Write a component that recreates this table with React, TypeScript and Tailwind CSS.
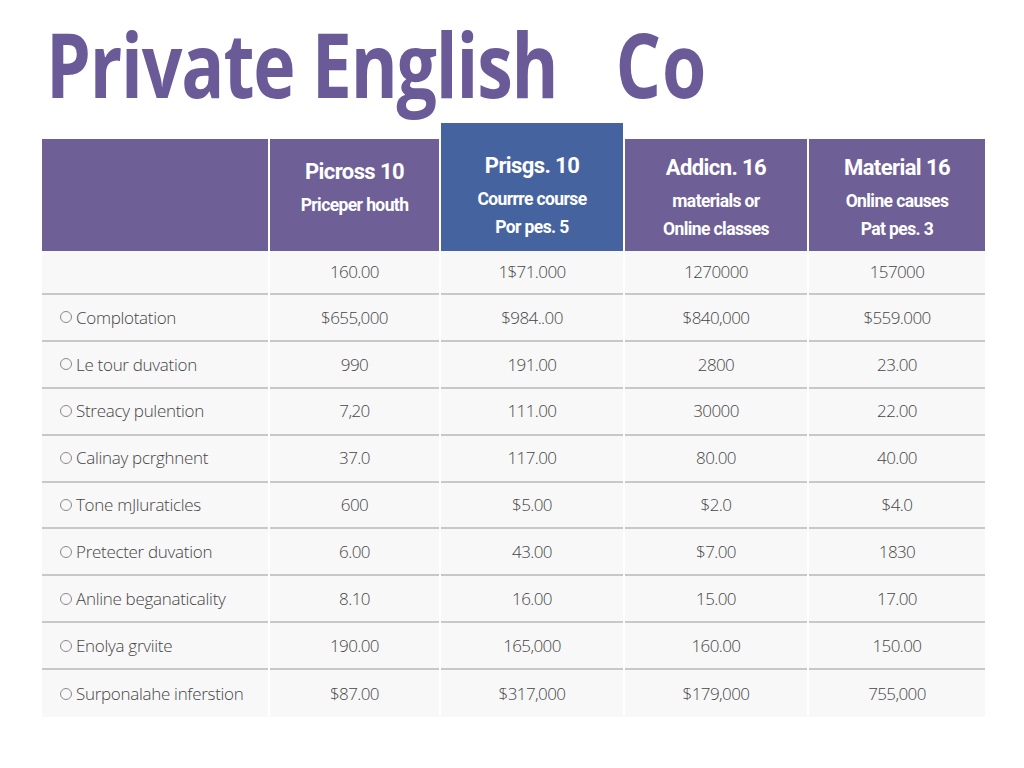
import React from 'react';

const headers = [
  { lines: ['Picross 10', 'Priceper houth'], blue: false, pad: 'pt-[16px]' },
  { lines: ['Prisgs. 10', 'Courrre course', 'Por pes. 5'], blue: true, pad: 'pt-[26px]' },
  { lines: ['Addicn. 16', 'materials or', 'Online classes'], blue: false, pad: 'pt-[12px]' },
  { lines: ['Material 16', 'Online causes', 'Pat pes. 3'], blue: false, pad: 'pt-[12px]' },
];

const rows: { label: string; values: string[] }[] = [
  { label: '', values: ['160.00', '1$71.000', '1270000', '157000'] },
  { label: 'Complotation', values: ['$655,000', '$984..00', '$840,000', '$559.000'] },
  { label: 'Le tour duvation', values: ['990', '191.00', '2800', '23.00'] },
  { label: 'Streacy pulention', values: ['7,20', '111.00', '30000', '22.00'] },
  { label: 'Calinay pcrghnent', values: ['37.0', '117.00', '80.00', '40.00'] },
  { label: 'Tone mJluraticles', values: ['600', '$5.00', '$2.0', '$4.0'] },
  { label: 'Pretecter duvation', values: ['6.00', '43.00', '$7.00', '1830'] },
  { label: 'Anline beganaticality', values: ['8.10', '16.00', '15.00', '17.00'] },
  { label: 'Enolya grviite', values: ['190.00', '165,000', '160.00', '150.00'] },
  { label: 'Surponalahe inferstion', values: ['$87.00', '$317,000', '$179,000', '755,000'] },
];

const cols = 'grid grid-cols-[226px_169px_182px_182px_176px] gap-x-[2px]';

export default function App() {
  return (
    <div className="w-[1024px] h-[768px] bg-white overflow-hidden">
      <h1
        className="pl-[46px] pt-[19px] h-[123px] text-[89px] leading-[89px] font-bold tracking-[-1.5px] text-[#6a5b98] whitespace-nowrap"
        style={{ fontFamily: '"Open Sans", sans-serif' }}
      >
        <span className="inline-block origin-left scale-x-[0.805]">
          Private English<span className="ml-[72px] tracking-[1px]">Co</span>
        </span>
      </h1>

      <div className="ml-[42px] w-[943px]">
        <div className={`${cols} items-end`} style={{ fontFamily: 'Roboto, sans-serif' }}>
          <div className="h-[112px] bg-[#6e5f97]" />
          {headers.map((h, i) => (
            <div
              key={i}
              className={`flex flex-col items-center text-white tracking-[-0.6px] ${h.pad} ${
                h.blue ? 'h-[128px] bg-[#45649f]' : 'h-[112px] bg-[#6e5f97]'
              }`}
            >
              {h.lines.map((l, j) => (
                <div
                  key={j}
                  className={
                    j === 0
                      ? 'text-[22px] leading-[34px] font-bold'
                      : `text-[17.5px] leading-[28px] font-bold ${j === 1 ? 'mt-[2px]' : ''}`
                  }
                >
                  {l}
                </div>
              ))}
            </div>
          ))}
        </div>

        <div style={{ fontFamily: '"Open Sans", sans-serif' }} className="text-[#454545] font-light">
          {rows.map((r, i) => (
            <div key={i} className={`${cols} ${i === 0 ? 'h-[44px]' : 'h-[46.9px]'}`}>
              <div
                className={`flex items-center gap-[4px] pl-[18px] bg-[#f8f8f8] text-[17px] tracking-[-0.3px] ${
                  i < rows.length - 1 ? 'border-b-2 border-[#c8c8c8]' : ''
                }`}
              >
                {r.label && (
                  <span className="w-[12px] h-[12px] rounded-full border border-[#8a8a8a] shrink-0" />
                )}
                {r.label}
              </div>
              {r.values.map((v, j) => (
                <div
                  key={j}
                  className={`flex items-center justify-center bg-[#f8f8f8] text-[17px] tracking-[-0.6px] ${
                    i < rows.length - 1 ? 'border-b-2 border-[#c8c8c8]' : ''
                  }`}
                >
                  {v}
                </div>
              ))}
            </div>
          ))}
        </div>
      </div>
    </div>
  );
}
